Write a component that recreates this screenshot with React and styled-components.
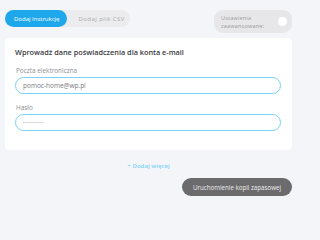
import React from 'react';
import styled, { createGlobalStyle } from 'styled-components';

const GlobalStyle = createGlobalStyle`
  html, body {
    margin: 0;
    padding: 0;
    background: #f4f5f9;
    font-family: "Open Sans", "Liberation Sans", sans-serif;
  }
`;

const Page = styled.div`
  width: 300px;
  height: 204px;
  padding: 10px 8px 0 5px;
  box-sizing: border-box;
  display: flex;
  flex-direction: column;
`;

const TopBar = styled.div`
  display: flex;
  justify-content: space-between;
  align-items: flex-start;
  height: 27px;
`;

const Tabs = styled.div`
  display: flex;
  background: #ececee;
  border-radius: 9px;
  height: 17px;
`;

const Tab = styled.button`
  border: none;
  border-radius: 9px;
  padding: ${(p) => (p.$active ? '0 8px 0 9px' : '0 5px 0 11px')};
  height: 17px;
  font-family: inherit;
  font-size: 6px;
  letter-spacing: ${(p) => (p.$active ? '0' : '0.45px')};
  background: ${(p) => (p.$active ? '#1ea7ea' : 'transparent')};
  color: ${(p) => (p.$active ? '#ffffff' : '#a9a9ad')};
  cursor: pointer;
`;

const Advanced = styled.div`
  display: flex;
  align-items: center;
  gap: 8px;
  width: 78px;
  height: 23px;
  box-sizing: border-box;
  padding: 0 5px 0 7px;
  background: #e7e7e9;
  border-radius: 9px;
  font-size: 5.6px;
  line-height: 8px;
  letter-spacing: 0.15px;
  color: #9a9aa0;
`;

const Knob = styled.span`
  width: 9px;
  height: 9px;
  border-radius: 50%;
  background: #ffffff;
  margin-left: auto;
`;

const Card = styled.div`
  margin-top: 1px;
  background: #ffffff;
  border-radius: 4px;
  padding: 9px 11px 19px 10px;
`;

const Title = styled.div`
  font-size: 7.3px;
  font-weight: 600;
  color: #3a3a3f;
  margin-bottom: 9px;
`;

const Label = styled.div`
  font-size: 6.4px;
  color: #8e8e94;
  margin: 0 0 2px 1px;
`;

const Input = styled.input`
  display: block;
  width: 100%;
  height: 17px;
  box-sizing: border-box;
  border: 1.3px solid #79d3f6;
  border-radius: 9px;
  padding: 0 7px;
  font-family: inherit;
  font-size: ${(p) => (p.type === 'password' ? '3.6px' : '6.5px')};
  letter-spacing: ${(p) => (p.type === 'password' ? '0.4px' : '0')};
  color: ${(p) => (p.type === 'password' ? '#a6a6aa' : '#7a7a80')};
  margin-bottom: 9px;
  outline: none;
  &:last-child {
    margin-bottom: 0;
  }
`;

const AddMore = styled.div`
  text-align: center;
  margin-top: 11px;
  font-size: 6.1px;
  font-weight: 600;
  color: #7fd3f6;
`;

const Footer = styled.div`
  display: flex;
  justify-content: flex-end;
  margin-top: 8px;
`;

const RunButton = styled.button`
  border: none;
  background: #6b6b6d;
  color: #eeeeee;
  height: 18px;
  width: 110px;
  border-radius: 9px;
  font-family: inherit;
  font-size: 6.2px;
`;

export default function App() {
  return (
    <>
      <GlobalStyle />
      <Page>
        <TopBar>
          <Tabs>
            <Tab $active>Dodaj Instrukcję</Tab>
            <Tab>Dodaj plik CSV</Tab>
          </Tabs>
          <Advanced>
            <span>Ustawienia<br />zaawansowane:</span>
            <Knob />
          </Advanced>
        </TopBar>
        <Card>
          <Title>Wprowadź dane poświadczenia dla konta e-mail</Title>
          <Label>Poczta elektroniczna</Label>
          <Input defaultValue="pomoc-home@wp.pl" />
          <Label>Hasło</Label>
          <Input type="password" defaultValue="pomochome123" />
        </Card>
        <AddMore>+ Dodaj więcej</AddMore>
        <Footer>
          <RunButton>Uruchomienie kopii zapasowej</RunButton>
        </Footer>
      </Page>
    </>
  );
}
